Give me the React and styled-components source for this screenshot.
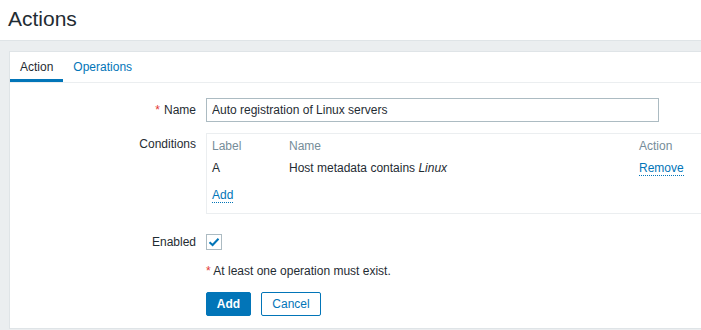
import React, { useState } from 'react';
import styled, { createGlobalStyle } from 'styled-components';

const GlobalStyle = createGlobalStyle`
    html, body {
        margin: 0;
        padding: 0;
        background: #fff;
        overflow: hidden;
    }
    body {
        font-family: 'Liberation Sans', Arial, sans-serif;
        font-size: 12px;
        color: #1f2c33;
    }
`;

const App = () => {
    const [enabled, setEnabled] = useState(true);
    const [name, setName] = useState('Auto registration of Linux servers');

    return (
        <Page>
            <GlobalStyle />
            <Header>
                <Title>Actions</Title>
            </Header>
            <Wrapper>
                <Panel>
                    <Tabs>
                        <Tab active>Action</Tab>
                        <Tab>Operations</Tab>
                    </Tabs>
                    <Form>
                        <FormRow>
                            <Label required>Name</Label>
                            <Field>
                                <TextInput value={name} onChange={(e) => setName(e.target.value)} />
                            </Field>
                        </FormRow>

                        <FormRow gap={11}>
                            <Label top>Conditions</Label>
                            <Field>
                                <ConditionsBox>
                                    <Table>
                                        <thead>
                                            <tr>
                                                <Th width={77}>Label</Th>
                                                <Th width={350}>Name</Th>
                                                <Th>Action</Th>
                                            </tr>
                                        </thead>
                                        <tbody>
                                            <tr>
                                                <Td>A</Td>
                                                <Td>Host metadata contains <i>Linux</i></Td>
                                                <Td><LinkText>Remove</LinkText></Td>
                                            </tr>
                                            <tr>
                                                <Td colSpan={3} addRow><LinkText>Add</LinkText></Td>
                                            </tr>
                                        </tbody>
                                    </Table>
                                </ConditionsBox>
                            </Field>
                        </FormRow>

                        <FormRow gap={20}>
                            <Label>Enabled</Label>
                            <Field>
                                <Checkbox onClick={() => setEnabled(!enabled)}>
                                    {enabled && (
                                        <svg width="12" height="10" viewBox="0 0 12 10">
                                            <path d="M1.5 5.2 L4.6 8 L10.5 1.8" fill="none" stroke="#0275b8" strokeWidth="2" />
                                        </svg>
                                    )}
                                </Checkbox>
                            </Field>
                        </FormRow>

                        <FormRow gap={14}>
                            <Label />
                            <Field>
                                <Note><Star>*</Star> At least one operation must exist.</Note>
                            </Field>
                        </FormRow>

                        <FormRow gap={14}>
                            <Label />
                            <Field>
                                <Buttons>
                                    <Button primary>Add</Button>
                                    <Button>Cancel</Button>
                                </Buttons>
                            </Field>
                        </FormRow>
                    </Form>
                </Panel>
            </Wrapper>
        </Page>
    );
}

const Page = styled.div`
    width: 701px;
    height: 330px;
    overflow: hidden;
`;

const Header = styled.div`
    height: 40px;
    padding-left: 8px;
    display: flex;
    align-items: center;
`;

const Title = styled.h1`
    margin: 0;
    font-size: 21px;
    font-weight: normal;
    color: #1f2c33;
    line-height: 24px;
    margin-top: -2px;
`;

const Wrapper = styled.div`
    background: #ebeef0;
    border-top: 1px solid #dfe4e7;
    padding: 10px 0 1px 9px;
    height: 290px;
    box-sizing: border-box;
`;

const Panel = styled.div`
    background: #fff;
    border: 1px solid #dfe4e7;
    border-right: none;
    height: 100%;
    box-sizing: border-box;
    overflow: hidden;
`;

const Tabs = styled.div`
    display: flex;
    height: 31px;
    border-bottom: 1px solid #ebeef0;
    box-sizing: border-box;
`;

const Tab = styled.div`
    padding: 0 10px;
    display: flex;
    align-items: center;
    color: ${(p) => (p.active ? '#1f2c33' : '#0275b8')};
    border-bottom: 3px solid ${(p) => (p.active ? '#0275b8' : 'transparent')};
    padding-top: 2px;
    cursor: pointer;
`;

const Form = styled.div`
    padding-top: 15px;
`;

const FormRow = styled.div`
    display: grid;
    grid-template-columns: 186px 1fr;
    column-gap: 10px;
    align-items: center;
    margin-top: ${(p) => p.gap || 0}px;
`;

const Label = styled.div`
    text-align: right;
    align-self: ${(p) => (p.top ? 'start' : 'center')};
    padding-top: ${(p) => (p.top ? '4px' : '0')};

    ${(p) => p.required && `
        &::before {
            content: '*';
            color: #e33734;
            margin-right: 4px;
        }
    `}
`;

const Field = styled.div`
    display: flex;
    align-items: center;
`;

const TextInput = styled.input`
    width: 453px;
    height: 24px;
    box-sizing: border-box;
    border: 1px solid #acbbc2;
    padding: 0 5px;
    font-family: 'Liberation Sans', Arial, sans-serif;
    font-size: 12px;
    color: #1f2c33;
    outline: none;
`;

const ConditionsBox = styled.div`
    width: 520px;
    flex: none;
    border: 1px solid #ebeef0;
    padding: 2px 5px 3px;
    box-sizing: border-box;
`;

const Table = styled.table`
    border-collapse: collapse;
    width: 100%;
`;

const Th = styled.th`
    text-align: left;
    font-weight: normal;
    color: #768d99;
    height: 20px;
    padding: 0;
    width: ${(p) => (p.width ? `${p.width}px` : 'auto')};
`;

const Td = styled.td`
    padding: 0;
    height: ${(p) => (p.addRow ? '30px' : '24px')};
    vertical-align: middle;
`;

const LinkText = styled.span`
    color: #0275b8;
    border-bottom: 1px dotted #0275b8;
    cursor: pointer;
`;

const Checkbox = styled.div`
    width: 16px;
    height: 16px;
    box-sizing: border-box;
    border: 1px solid #acbbc2;
    display: flex;
    align-items: center;
    justify-content: center;
    cursor: pointer;
`;

const Note = styled.div`
    color: #1f2c33;
`;

const Star = styled.span`
    color: #e33734;
`;

const Buttons = styled.div`
    display: flex;
    gap: 10px;
`;

const Button = styled.button`
    height: 24px;
    padding: 0;
    width: ${(p) => (p.primary ? '45px' : '60px')};
    border-radius: 2px;
    border: 1px solid #0275b8;
    background: ${(p) => (p.primary ? '#0275b8' : '#fff')};
    color: ${(p) => (p.primary ? '#fff' : '#0275b8')};
    font-family: 'Liberation Sans', Arial, sans-serif;
    font-size: 12px;
    font-weight: ${(p) => (p.primary ? 'bold' : 'normal')};
    cursor: pointer;
`;

export default App;
